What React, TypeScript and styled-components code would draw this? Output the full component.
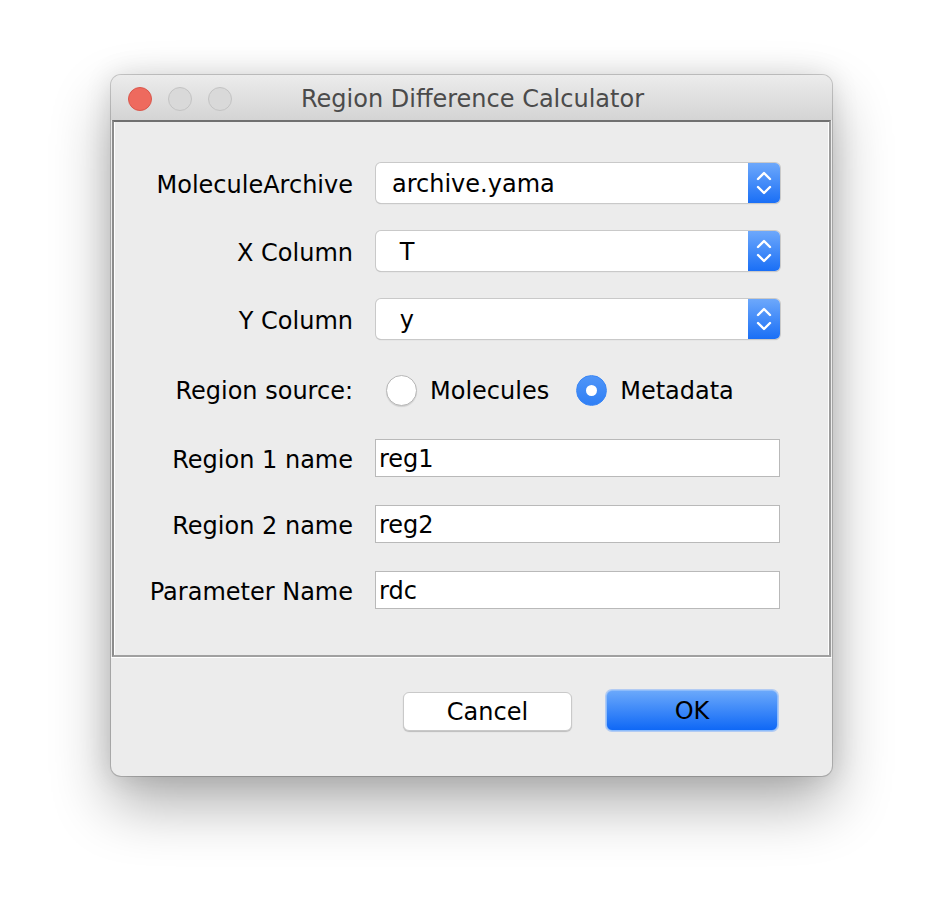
import React from "react";
import styled, { createGlobalStyle } from "styled-components";

const GlobalStyle = createGlobalStyle`
  html, body {
    margin: 0;
    padding: 0;
    background: #ffffff;
  }
  body {
    font-family: "DejaVu Sans", "Liberation Sans", sans-serif;
  }
`;

const Page = styled.div`
  width: 944px;
  height: 924px;
  padding: 75px 0 0 111px;
  box-sizing: border-box;
`;

const Window = styled.div`
  width: 721px;
  height: 701px;
  display: flex;
  flex-direction: column;
  background: #ececec;
  border-radius: 10px;
  overflow: hidden;
  box-shadow: 0 0 0 1px rgba(0, 0, 0, 0.18), 0 28px 60px rgba(0, 0, 0, 0.32),
    0 0 28px rgba(0, 0, 0, 0.12);
`;

const TitleBar = styled.div`
  position: relative;
  height: 45px;
  flex: none;
  display: flex;
  align-items: center;
  justify-content: center;
  background: linear-gradient(#ececec, #d4d4d4);
`;

const Lights = styled.div`
  position: absolute;
  left: 17px;
  top: 12px;
  display: flex;
  gap: 16px;
`;

const Light = styled.span<{ $red?: boolean }>`
  width: 24px;
  height: 24px;
  border-radius: 50%;
  box-sizing: border-box;
  background: ${(p) => (p.$red ? "#ee6a5e" : "#d9d9d9")};
  border: 1px solid ${(p) => (p.$red ? "#d9574c" : "#c3c3c3")};
`;

const Title = styled.div`
  font-size: 24px;
  color: #4b4b4b;
  margin-left: 2px;
  padding-top: 2px;
`;

const Panel = styled.div`
  margin: 0 1px;
  height: 537px;
  box-sizing: border-box;
  border-top: 2px solid #707070;
  border-left: 2px solid #8c8c8c;
  border-right: 2px solid #9c9c9c;
  border-bottom: 2px solid #a0a0a0;
  box-shadow: inset 1px 0 0 #ffffff, inset -1px 0 0 #ffffff;
  padding: 27px 0 0 19px;
  display: grid;
  grid-template-columns: 220px 405px;
  grid-template-rows: 68px 68px 68px 72px 66px 66px 66px;
  column-gap: 22px;
  align-items: center;
`;

const Label = styled.div`
  font-size: 24px;
  color: #000;
  text-align: right;
  white-space: nowrap;
  padding-top: 3px;
`;

const Combo = styled.div`
  margin-left: 1px;
  height: 40px;
  display: flex;
  background: #fff;
  border-radius: 5px;
  box-shadow: 0 0 0 1px #c9c9c9, 0 1px 1px rgba(0, 0, 0, 0.25);
  overflow: hidden;
`;

const ComboText = styled.div`
  flex: 1;
  display: flex;
  align-items: center;
  padding: 1px 0 0 16px;
  font-size: 24px;
  color: #000;
  white-space: pre;
`;

const ComboArrow = styled.div`
  width: 32px;
  flex: none;
  display: flex;
  align-items: center;
  justify-content: center;
  background: linear-gradient(#6da8fb, #1a6ff6);
`;

const RadioGroup = styled.div`
  display: flex;
  align-items: center;
  margin-left: 11px;
  padding-top: 2px;
`;

const RadioItem = styled.label`
  display: flex;
  align-items: center;
  gap: 13px;
  margin-right: 27px;
  font-size: 24px;
  color: #000;
`;

const RadioText = styled.span`
  padding-top: 2px;
`;

const RadioDot = styled.span<{ $on?: boolean }>`
  width: 31px;
  height: 31px;
  box-sizing: border-box;
  border-radius: 50%;
  display: flex;
  align-items: center;
  justify-content: center;
  background: ${(p) => (p.$on ? "linear-gradient(#4f95f8, #2f7ff5)" : "#fff")};
  border: 1px solid ${(p) => (p.$on ? "#3a86f5" : "#b7b7b7")};
  box-shadow: ${(p) => (p.$on ? "none" : "0 1px 1px rgba(0,0,0,0.12)")};
  &::after {
    content: "";
    display: ${(p) => (p.$on ? "block" : "none")};
    width: 11px;
    height: 11px;
    border-radius: 50%;
    background: #fff;
  }
`;

const Field = styled.div`
  height: 38px;
  box-sizing: border-box;
  border: 1px solid #b9b9b9;
  background: #fff;
  display: flex;
  align-items: center;
  padding: 1px 0 0 3px;
  font-size: 24px;
  color: #000;
`;

const Footer = styled.div`
  flex: 1;
  border-top: 1px solid #ffffff;
  display: flex;
  justify-content: flex-end;
  align-items: flex-start;
  gap: 34px;
  padding: 34px 54px 0 0;
`;

const Button = styled.div<{ $primary?: boolean }>`
  width: ${(p) => (p.$primary ? "172px" : "169px")};
  height: ${(p) => (p.$primary ? "41px" : "39px")};
  margin-top: ${(p) => (p.$primary ? "-2px" : "0")};
  box-sizing: border-box;
  border-radius: 6px;
  display: flex;
  align-items: center;
  justify-content: center;
  font-size: 24px;
  color: #000;
  background: ${(p) => (p.$primary ? "linear-gradient(#6aa8fb, #0f68f6)" : "#fff")};
  border: 1px solid ${(p) => (p.$primary ? "#8dbcfb" : "#c9c9c9")};
  box-shadow: ${(p) =>
    p.$primary ? "0 0 0 1px rgba(120,170,250,0.5)" : "0 1px 1px rgba(0,0,0,0.2)"};
`;

const Chevrons = () => (
  <svg width="18" height="30" viewBox="0 0 18 30">
    <path d="M3 11 L9 5 L15 11" fill="none" stroke="#fff" strokeWidth="2.4" strokeLinecap="round" strokeLinejoin="round" />
    <path d="M3 19 L9 25 L15 19" fill="none" stroke="#fff" strokeWidth="2.4" strokeLinecap="round" strokeLinejoin="round" />
  </svg>
);

const combos = [
  { label: "MoleculeArchive", value: "archive.yama" },
  { label: "X Column", value: " T" },
  { label: "Y Column", value: " y" },
];

const fields = [
  { label: "Region 1 name", value: "reg1" },
  { label: "Region 2 name", value: "reg2" },
  { label: "Parameter Name", value: "rdc" },
];

export default function App() {
  return (
    <Page>
      <GlobalStyle />
      <Window>
        <TitleBar>
          <Lights>
            <Light $red />
            <Light />
            <Light />
          </Lights>
          <Title>Region Difference Calculator</Title>
        </TitleBar>
        <Panel>
          {combos.map((c) => (
            <React.Fragment key={c.label}>
              <Label>{c.label}</Label>
              <Combo>
                <ComboText>{c.value}</ComboText>
                <ComboArrow>
                  <Chevrons />
                </ComboArrow>
              </Combo>
            </React.Fragment>
          ))}
          <Label>Region source:</Label>
          <RadioGroup>
            <RadioItem>
              <RadioDot />
              <RadioText>Molecules</RadioText>
            </RadioItem>
            <RadioItem>
              <RadioDot $on />
              <RadioText>Metadata</RadioText>
            </RadioItem>
          </RadioGroup>
          {fields.map((f) => (
            <React.Fragment key={f.label}>
              <Label>{f.label}</Label>
              <Field>{f.value}</Field>
            </React.Fragment>
          ))}
        </Panel>
        <Footer>
          <Button>Cancel</Button>
          <Button $primary>OK</Button>
        </Footer>
      </Window>
    </Page>
  );
}
